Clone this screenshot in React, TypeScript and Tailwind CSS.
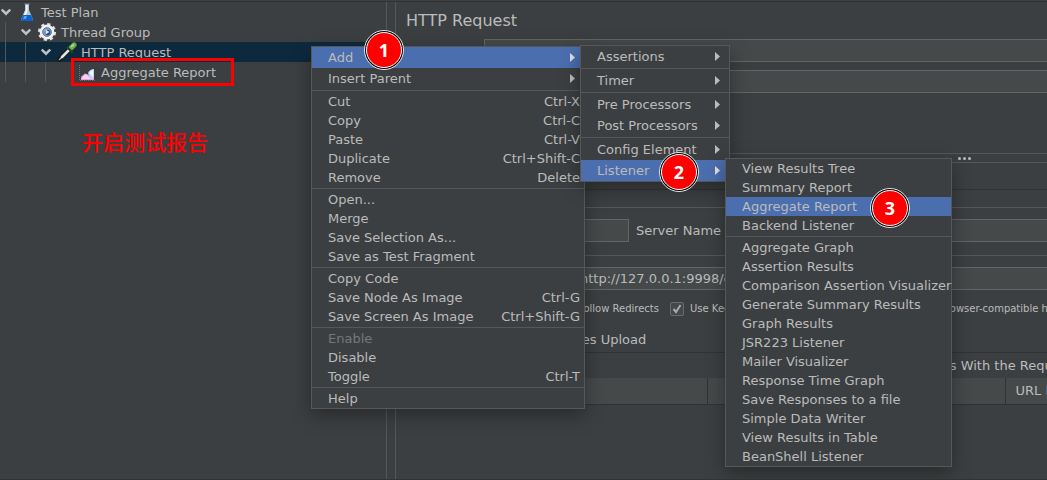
import { Fragment, type ReactNode } from 'react';
import clsx from 'clsx';

interface MenuEntry {
  label: string;
  shortcut?: string;
  submenu?: boolean;
  active?: boolean;
  disabled?: boolean;
}

const nodeMenu: MenuEntry[][] = [
  [
    { label: 'Add', submenu: true, active: true },
    { label: 'Insert Parent', submenu: true },
  ],
  [
    { label: 'Cut', shortcut: 'Ctrl-X' },
    { label: 'Copy', shortcut: 'Ctrl-C' },
    { label: 'Paste', shortcut: 'Ctrl-V' },
    { label: 'Duplicate', shortcut: 'Ctrl+Shift-C' },
    { label: 'Remove', shortcut: 'Delete' },
  ],
  [
    { label: 'Open...' },
    { label: 'Merge' },
    { label: 'Save Selection As...' },
    { label: 'Save as Test Fragment' },
  ],
  [
    { label: 'Copy Code' },
    { label: 'Save Node As Image', shortcut: 'Ctrl-G' },
    { label: 'Save Screen As Image', shortcut: 'Ctrl+Shift-G' },
  ],
  [
    { label: 'Enable', disabled: true },
    { label: 'Disable' },
    { label: 'Toggle', shortcut: 'Ctrl-T' },
  ],
  [{ label: 'Help' }],
];

const addMenu: MenuEntry[][] = [
  [{ label: 'Assertions', submenu: true }],
  [{ label: 'Timer', submenu: true }],
  [
    { label: 'Pre Processors', submenu: true },
    { label: 'Post Processors', submenu: true },
  ],
  [
    { label: 'Config Element', submenu: true },
    { label: 'Listener', submenu: true, active: true },
  ],
];

const listenerMenu: MenuEntry[][] = [
  [
    { label: 'View Results Tree' },
    { label: 'Summary Report' },
    { label: 'Aggregate Report', active: true },
    { label: 'Backend Listener' },
  ],
  [
    { label: 'Aggregate Graph' },
    { label: 'Assertion Results' },
    { label: 'Comparison Assertion Visualizer' },
    { label: 'Generate Summary Results' },
    { label: 'Graph Results' },
    { label: 'JSR223 Listener' },
    { label: 'Mailer Visualizer' },
    { label: 'Response Time Graph' },
    { label: 'Save Responses to a file' },
    { label: 'Simple Data Writer' },
    { label: 'View Results in Table' },
    { label: 'BeanShell Listener' },
  ],
];

function Menu({ groups, label, className }: { groups: MenuEntry[][]; label: string; className: string }) {
  return (
    <div
      role="menu"
      aria-label={label}
      className={clsx('absolute border border-[#555758] bg-[#3c3f41] shadow-[0_6px_18px_rgba(0,0,0,0.35)]', className)}
    >
      {groups.map((group, i) => (
        <Fragment key={i}>
          {i > 0 && <div role="separator" className="my-px h-px bg-[#555758]" />}
          {group.map((entry) => (
            <button
              key={entry.label}
              type="button"
              role="menuitem"
              disabled={entry.disabled}
              className={clsx(
                'flex w-full items-center justify-between whitespace-nowrap pl-4 text-left',
                entry.submenu ? 'h-[21px] pr-[9px]' : 'h-[19px] pr-1',
                entry.active && 'bg-[#4b6eaf]',
                entry.disabled && 'text-[#777777]',
              )}
            >
              <span>{entry.label}</span>
              {entry.shortcut && <span>{entry.shortcut}</span>}
              {entry.submenu && (
                <svg
                  viewBox="0 0 5 9"
                  className={clsx('h-[9px] w-[5px]', entry.active ? 'fill-[#e0e0e0]' : 'fill-current')}
                  aria-hidden="true"
                >
                  <path d="M0 0 L5 4.5 L0 9 Z" />
                </svg>
              )}
            </button>
          ))}
        </Fragment>
      ))}
    </div>
  );
}

function Badge({ value, className }: { value: number; className: string }) {
  return (
    <span
      className={clsx(
        'absolute flex size-10 items-center justify-center rounded-full border border-[#e8e8e8] bg-black p-px',
        className,
      )}
    >
      <span className="flex size-full items-center justify-center rounded-full border border-white bg-[#ff0000] font-['Noto_Sans',sans-serif] text-lg font-bold text-white">
        {value}
      </span>
    </span>
  );
}

function Chevron() {
  return (
    <svg viewBox="0 0 10 10" className="size-[10px]" fill="none" stroke="#c0c2c3" strokeWidth="2.4" aria-hidden="true">
      <path d="M0.8 2.5 L5 6.7 L9.2 2.5" />
    </svg>
  );
}

function FlaskIcon() {
  return (
    <svg viewBox="0 0 20 20" className="size-5" aria-hidden="true">
      <path d="M8 2h4v6l4 9.5q.4 1.5-1 1.500H5q-1.400 0-1-1.500L8 8z" fill="#b9c6d0" />
      <path d="M9 3h1.500v6l-2 5h-2l2.500-6z" fill="#f6fafc" />
      <path d="M6 13h8l2 4.500q.4 1.500-1 1.500H5q-1.400 0-1-1.500z" fill="#0d62c9" />
      <path d="M7 14h3l-1 3H6z" fill="#4ea1f2" />
      <path d="M7.500 2h5" stroke="#7d8a94" />
    </svg>
  );
}

function GearIcon() {
  return (
    <svg viewBox="0 0 20 20" className="size-5" aria-hidden="true">
      <circle cx="10" cy="10" r="7.800" fill="none" stroke="#dcdcdc" strokeWidth="2.600" strokeDasharray="3.200 2.926" />
      <circle cx="10" cy="10" r="6" fill="#7f9bc8" stroke="#f0f0f0" strokeWidth="2.800" />
      <circle cx="10" cy="10" r="4.300" fill="#8aa6d3" stroke="#55657e" strokeWidth=".8" />
      <circle cx="10.500" cy="10.500" r="2.800" fill="#1f458a" />
      <path d="M8.500 7.500l4 2.500-4 2.500z" fill="#dce8fa" />
    </svg>
  );
}

function PipetteIcon() {
  return (
    <svg viewBox="0 0 20 20" className="size-5" strokeLinecap="round" aria-hidden="true">
      <path d="M2.500 17.500L5 14.500L11.500 8.500" fill="none" stroke="#17191a" strokeWidth="4.600" />
      <path d="M2.500 17.500L5 15" stroke="#aeb4b2" strokeWidth="1.500" />
      <path d="M5 15L11.500 8.500" stroke="#dfe4e2" strokeWidth="2.600" />
      <path d="M14 6L17 3" stroke="#2f5a22" strokeWidth="6" />
      <path d="M14 6L17 3" stroke="#6fae52" strokeWidth="4.600" />
      <path d="M10.500 5.500l4.500 4.500" stroke="#24451a" strokeWidth="2.200" />
      <path d="M14.500 4.500l2-1.800" stroke="#b5dfa0" strokeWidth="1.500" />
    </svg>
  );
}

function ReportIcon() {
  return (
    <svg viewBox="0 0 20 20" className="size-5" aria-hidden="true">
      <path d="M2.500 3v15.500h16" fill="none" stroke="#6f7375" strokeDasharray="1 1" />
      <path d="M4 18v-3l2-2 2-1.500 3 1 2 1.500 4 1v3z" fill="#f29be0" />
      <path d="M4.500 17q2-4 5-4.500l4 4.500z" fill="#fbd3f3" />
      <path d="M11 11q2-4 6-4v8l-2 3q-3-3-4-7z" fill="#b9dcfa" />
      <path d="M12.500 11q1.500-2.500 3.500-3v7z" fill="#f2f9ff" />
    </svg>
  );
}

function TreeRow({ label, icon, leaf, selected, className }: {
  label: string;
  icon: ReactNode;
  leaf?: boolean;
  selected?: boolean;
  className: string;
}) {
  return (
    <li
      role="treeitem"
      aria-selected={!!selected}
      className={clsx('flex h-5 items-center', selected && 'bg-[#0d293e]', className)}
    >
      <span className="flex w-4 shrink-0">{!leaf && <Chevron />}</span>
      {icon}
      <span className="pl-1">{label}</span>
    </li>
  );
}

// Vertical indent guides, one per open level
function Guides() {
  return (
    <div className="absolute left-[5px] top-5 flex gap-[19px]">
      <span className="h-[60px] w-px bg-[#555758]" />
      <span className="mt-5 h-10 w-px bg-[#555758]" />
      <span className="mt-10 h-5 w-px bg-[#555758]" />
    </div>
  );
}

function CheckBox({ label, className }: { label: string; className?: string }) {
  return (
    <label className={clsx('flex items-center gap-[6px] whitespace-nowrap', className)}>
      <span className="relative flex size-[14px]">
        <input
          type="checkbox"
          defaultChecked
          className="peer size-full appearance-none rounded-xs border border-[#6b6b6b] bg-[#43494a]"
        />
        <svg
          viewBox="0 0 14 14"
          className="pointer-events-none absolute inset-0 hidden peer-checked:block"
          fill="none"
          stroke="#a8aaab"
          strokeWidth="2"
          aria-hidden="true"
        >
          <path d="M3.500 7L6 10L10.500 3" />
        </svg>
      </span>
      {label}
    </label>
  );
}

const field = 'h-[23px] border border-[#646464] bg-[#45494a] px-[5px] outline-none';

export default function App() {
  return (
    <div className="relative flex h-screen flex-col overflow-hidden border-b border-[#323232] bg-[#3c3f41] font-['DejaVu_Sans',sans-serif] text-[13px] leading-[19px] text-[#bbbbbb]">
      <div className="mt-px h-px shrink-0 bg-[#323232]" />
      <div className="flex min-h-0 grow">
        <aside className="relative w-[387px] shrink-0 border-r border-[#555758]">
          <ul role="tree" aria-label="Test plan">
            <TreeRow label="Test Plan" icon={<FlaskIcon />} className="pl-px" />
            <TreeRow label="Thread Group" icon={<GearIcon />} className="pl-[21px]" />
            <TreeRow label="HTTP Request" icon={<PipetteIcon />} className="pl-[41px]" selected />
            <TreeRow label="Aggregate Report" icon={<ReportIcon />} className="pl-[61px]" leaf />
          </ul>
          <Guides />
          <div className="absolute left-[71px] top-14 h-[28px] w-[163px] border-3 border-[#ff0000]" />
          <p className="absolute left-[82px] top-[124px] font-['Noto_Sans_CJK_SC',sans-serif] text-[21px] font-medium leading-[30px] text-[#ff0000]">
            开启测试报告
          </p>
        </aside>

        <main className="ml-2 min-w-0 grow overflow-hidden border-l border-[#555758]">
          <h1 className="pl-[10px] pt-[7px] text-base leading-6">HTTP Request</h1>
          <div className="-mr-2 mt-[6px] flex flex-col gap-2 pl-[88px]">
            <input aria-label="Name" className={field} />
            <input aria-label="Comments" className={field} />
          </div>

          <section className="mt-15 border-t border-[#555758]">
            <div className="ml-auto flex h-[9px] w-[95px] items-center gap-[2px] border-b border-[#555758] pl-[6px]">
              <i className="size-[3px] rounded-full bg-[#bbbbbb]" />
              <i className="size-[3px] rounded-full bg-[#bbbbbb]" />
              <i className="size-[3px] rounded-full bg-[#bbbbbb]" />
            </div>
            <div className="mt-[26px] h-px bg-[#323232]" />
            <div className="-mr-2 mt-[17px] flex items-center border-y border-[#555758] pb-[13px] pl-[112px] pt-[11px]">
              <input aria-label="Protocol" className={clsx(field, 'w-[121px]')} />
              <label htmlFor="server" className="whitespace-nowrap pl-[7px] pr-2">
                Server Name or IP:
              </label>
              <input id="server" className={clsx(field, 'min-w-0 grow')} />
            </div>
            <div className="-mr-2 mt-[11px] flex pl-[178px]">
              <input aria-label="Path" defaultValue="http://127.0.0.1:9998/order" className={clsx(field, 'min-w-0 grow')} />
            </div>
            <div className="mt-[11px] flex text-[10px] leading-[15px]">
              <div className="flex w-[263px] shrink-0 justify-end">
                <CheckBox label="Follow Redirects" />
              </div>
              <CheckBox label="Use KeepAlive" className="ml-[11px]" />
              <CheckBox label="Browser-compatible headers" className="ml-[158px]" />
            </div>
            <nav className="mt-[11px] flex h-[26px] items-center border-b border-[#323232] pl-[172px]">
              <button type="button">Files Upload</button>
            </nav>
          </section>

          <div className="-mr-24 flex h-[25px] items-center justify-end whitespace-nowrap pr-[66px]">
            Send Parameters With the Request:
          </div>
          <table className="w-[760px] table-fixed border-collapse text-left">
            <thead>
              <tr className="h-[26px] border-b border-[#323232] bg-[#45494a]">
                <th className="w-[311px] border-r border-[#323232]" />
                <th className="w-[298px] border-r border-[#323232]" />
                <th className="whitespace-nowrap pl-[10px] font-normal">URL Encode?</th>
              </tr>
            </thead>
          </table>
        </main>
      </div>

      <Menu groups={nodeMenu} label="Node" className="left-[311px] top-[46px] w-[274px]" />
      <Menu groups={addMenu} label="Add" className="left-[580px] top-[45px] w-[150px]" />
      <Menu groups={listenerMenu} label="Listener" className="left-[725px] top-[158px] w-[227px]" />

      <Badge value={1} className="left-[364px] top-[30px]" />
      <Badge value={2} className="left-[659px] top-[152px]" />
      <Badge value={3} className="left-[870px] top-[188px]" />
    </div>
  );
}
